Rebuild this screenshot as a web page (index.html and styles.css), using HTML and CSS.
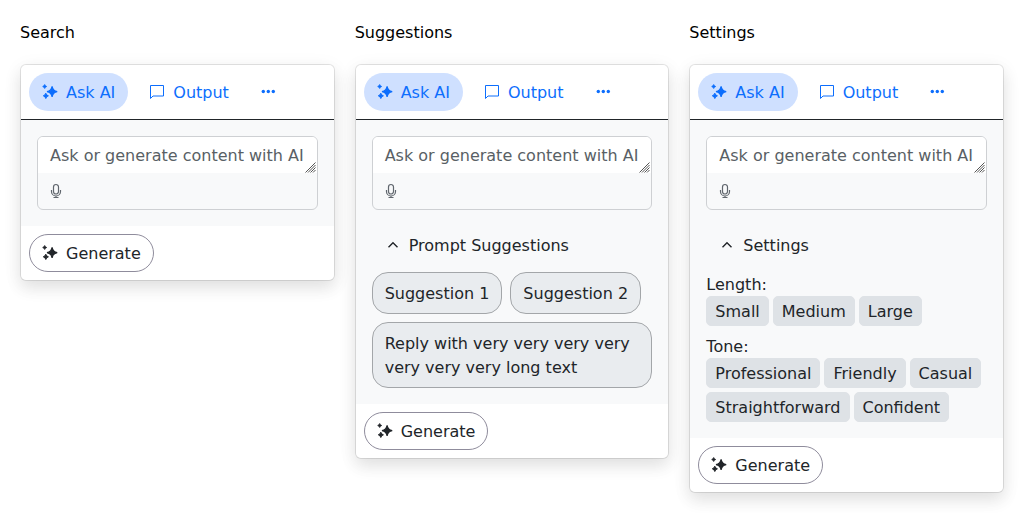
FILE: index.html
```
<!DOCTYPE html>
<html lang="en">
<head>
<meta charset="utf-8">
<title>AI Prompt</title>
<link rel="stylesheet" href="styles.css">
</head>
<body>
<svg class="sprite" aria-hidden="true">
  <symbol id="sparkles" viewBox="0 0 16 16">
    <path d="M10.1 2.400Q10.800 6.800 15.200 7.600Q10.800 8.400 10.100 12.800Q9.400 8.400 5 7.600Q9.400 6.800 10.100 2.400Z" stroke="currentColor" stroke-width="1.200"/>
    <path d="M2.700 .5Q3.100 2 4.700 2.500Q3.100 3 2.700 4.500Q2.300 3 .700 2.500Q2.300 2 2.700 .5Z" stroke="currentColor" stroke-width=".8"/>
    <path d="M3.800 9.200Q4.300 11.200 6.400 11.800Q4.300 12.400 3.800 14.500Q3.300 12.400 1.300 11.800Q3.300 11.200 3.800 9.200Z" stroke="currentColor" stroke-width="1"/>
  </symbol>
  <symbol id="comment" viewBox="0 0 16 16">
    <path d="M1.500 1.500h13v10.500h-10.500l-2.500 2.500z" fill="none" stroke="currentColor"/>
  </symbol>
  <symbol id="more" viewBox="0 0 16 16">
    <circle cx="3.300" cy="7.500" r="1.700"/><circle cx="8.300" cy="7.500" r="1.700"/><circle cx="13.300" cy="7.500" r="1.700"/>
  </symbol>
  <symbol id="mic" viewBox="0 0 16 16">
    <path d="M5.500 4a2.500 2.500 0 0 1 5 0v4.500a2.500 2.500 0 0 1-5 0zM3.500 7v1.500a4.500 4.500 0 0 0 9 0V7M8 13v1.500M5.500 14.500h5" fill="none" stroke="currentColor" stroke-width="1.200"/>
  </symbol>
  <symbol id="chevron" viewBox="0 0 16 16">
    <path d="M3.500 10.200L8 5.700l4.500 4.500" fill="none" stroke="currentColor" stroke-width="1.400"/>
  </symbol>
  <symbol id="grip" viewBox="0 0 11 11">
    <path d="M.5 10.500l10-10M3 10.500l7.500-7.500M5.500 10.500l5-5M8 10.500l2.500-2.500" fill="none" stroke="currentColor"/>
  </symbol>
</svg>
<main class="examples">
  <section>
    <h2 class="title">Search</h2>
    <div class="card">
      <div class="header">
        <button class="btn tab active"><svg class="icon"><use href="#sparkles"/></svg>Ask AI</button>
        <button class="btn tab"><svg class="icon"><use href="#comment"/></svg>Output</button>
        <button class="btn tab more"><svg class="icon"><use href="#more"/></svg></button>
      </div>
      <div class="content">
        <div class="prompt">
          <textarea class="input" rows="1" placeholder="Ask or generate content with AI"></textarea>
          <svg class="grip"><use href="#grip"/></svg>
          <div class="tools"><svg class="icon"><use href="#mic"/></svg></div>
        </div>
      </div>
      <div class="footer"><button class="btn generate"><svg class="icon"><use href="#sparkles"/></svg>Generate</button></div>
    </div>
  </section>
  <section>
    <h2 class="title">Suggestions</h2>
    <div class="card">
      <div class="header">
        <button class="btn tab active"><svg class="icon"><use href="#sparkles"/></svg>Ask AI</button>
        <button class="btn tab"><svg class="icon"><use href="#comment"/></svg>Output</button>
        <button class="btn tab more"><svg class="icon"><use href="#more"/></svg></button>
      </div>
      <div class="content">
        <div class="prompt">
          <textarea class="input" rows="1" placeholder="Ask or generate content with AI"></textarea>
          <svg class="grip"><use href="#grip"/></svg>
          <div class="tools"><svg class="icon"><use href="#mic"/></svg></div>
        </div>
        <div class="expander">
          <button class="btn"><svg class="icon"><use href="#chevron"/></svg>Prompt Suggestions</button>
          <div class="suggestions">
            <span class="suggestion">Suggestion 1</span>
            <span class="suggestion">Suggestion 2</span>
            <span class="suggestion">Reply with very very very very very very very long text</span>
          </div>
        </div>
      </div>
      <div class="footer"><button class="btn generate"><svg class="icon"><use href="#sparkles"/></svg>Generate</button></div>
    </div>
  </section>
  <section>
    <h2 class="title">Settings</h2>
    <div class="card">
      <div class="header">
        <button class="btn tab active"><svg class="icon"><use href="#sparkles"/></svg>Ask AI</button>
        <button class="btn tab"><svg class="icon"><use href="#comment"/></svg>Output</button>
        <button class="btn tab more"><svg class="icon"><use href="#more"/></svg></button>
      </div>
      <div class="content">
        <div class="prompt">
          <textarea class="input" rows="1" placeholder="Ask or generate content with AI"></textarea>
          <svg class="grip"><use href="#grip"/></svg>
          <div class="tools"><svg class="icon"><use href="#mic"/></svg></div>
        </div>
        <div class="expander">
          <button class="btn"><svg class="icon"><use href="#chevron"/></svg>Settings</button>
          <div class="settings">
            <div>
              <div class="label">Length:</div>
              <div class="chips"><span class="chip">Small</span><span class="chip">Medium</span><span class="chip">Large</span></div>
            </div>
            <div>
              <div class="label">Tone:</div>
              <div class="chips"><span class="chip">Professional</span><span class="chip">Friendly</span><span class="chip">Casual</span><span class="chip">Straightforward</span><span class="chip">Confident</span></div>
            </div>
          </div>
        </div>
      </div>
      <div class="footer"><button class="btn generate"><svg class="icon"><use href="#sparkles"/></svg>Generate</button></div>
    </div>
  </section>
</main>
</body>
</html>
```
FILE: styles.css
```
* { box-sizing: border-box; }
body {
  margin: 0;
  padding: 20px;
  background: #fff;
  color: #212529;
  font: 16px/24px "DejaVu Sans", sans-serif;
}
.sprite { display: none; }
.examples {
  display: grid;
  grid-template-columns: repeat(3, minmax(0, 1fr));
  align-items: start;
  gap: 20px;
}
.title {
  margin: 0 0 19px;
  padding-top: 1px;
  color: #000;
  font-size: 16px;
  font-weight: 400;
}
.card {
  overflow: hidden;
  border: 1px solid rgba(0, 0, 0, .1);
  border-radius: 6px;
  background: #fff;
  background-clip: padding-box;
  box-shadow: 0 8px 16px rgba(0, 0, 0, .08), 0 4px 20px rgba(0, 0, 0, .06);
}
.header {
  display: flex;
  gap: 8px;
  padding: 8px;
  border-bottom: 1px solid #212529;
}
.btn {
  display: inline-flex;
  align-items: center;
  gap: 8px;
  height: 38px;
  padding: 7px 12px 5px;
  border: 1px solid transparent;
  border-radius: 6px;
  background: transparent;
  color: inherit;
  font: inherit;
}
.icon {
  flex: none;
  width: 16px;
  height: 16px;
  fill: currentColor;
}
.btn .icon { margin-top: -2px; }
.tab { border-radius: 19px; color: #0d6efd; }
.active { background: #cfe0ff; }
.more { padding-inline: 9px; }
.content {
  display: flex;
  flex-direction: column;
  gap: 16px;
  padding: 16px;
  background: #f8f9fa;
}
.prompt {
  position: relative;
  overflow: hidden;
  border: 1px solid #ced0d3;
  border-radius: 6px;
}
.input {
  display: block;
  width: 100%;
  height: 36px;
  padding: 7px 12px 5px;
  overflow: hidden;
  border: 0;
  outline: 0;
  background: #fff;
  font: inherit;
  resize: none;
}
.input::placeholder { color: #595f65; }
.grip {
  position: absolute;
  top: 25px;
  right: 1px;
  width: 11px;
  height: 11px;
  color: #555;
}
.tools {
  display: flex;
  align-items: center;
  height: 36px;
  padding: 0 10px;
  color: #60666d;
}
.expander { display: flex; flex-direction: column; align-items: flex-start; gap: 8px; }
.suggestions { display: flex; flex-wrap: wrap; gap: 8px; }
.suggestion {
  padding: 9px 12px 7px;
  border: 1px solid #a3a6a9;
  border-radius: 16px;
  background: #e9ecef;
}
.settings { display: flex; flex-direction: column; gap: 8px; }
.label { height: 24px; padding-top: 1px; }
.chips { display: flex; flex-wrap: wrap; gap: 4px; }
.chip {
  padding: 3px 8px 1px;
  border: 1px solid #dee2e6;
  border-radius: 5px;
  background: #dee2e6;
}
.footer { display: flex; padding: 8px; }
.generate { border-color: #8f8c9c; border-radius: 19px; }
```
